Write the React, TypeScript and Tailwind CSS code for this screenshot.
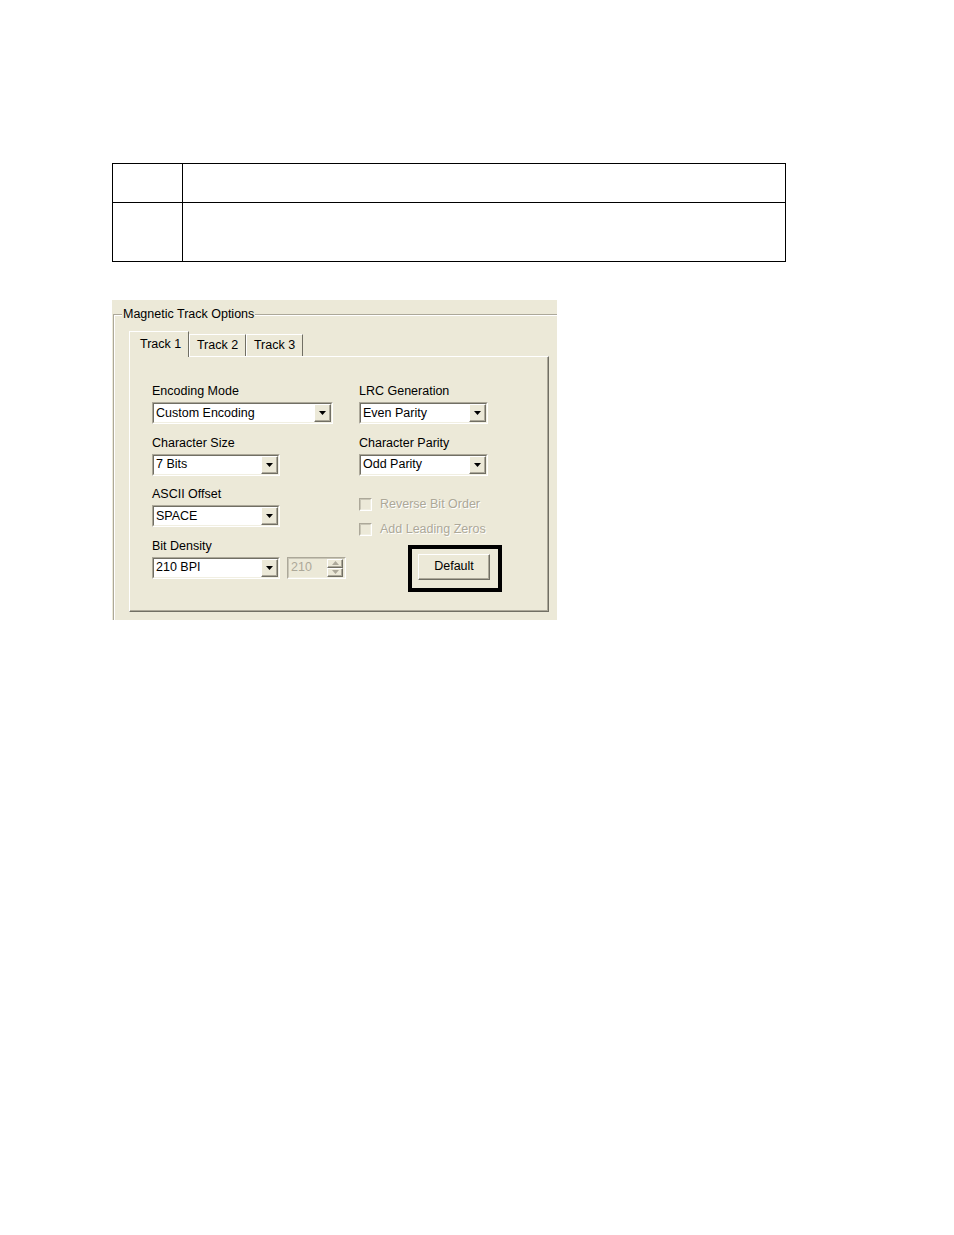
import React from 'react';

const font = { fontFamily: '"Liberation Sans", Arial, sans-serif' };

// sunken 3d frame used by combo boxes, spin box and checkboxes
const sunkenOuter = 'border border-t-[#ACA899] border-l-[#ACA899] border-r-white border-b-white';
const sunkenInner = 'border border-t-[#716F64] border-l-[#716F64] border-r-[#F1EFE2] border-b-[#F1EFE2]';
const raised =
  'border border-t-white border-l-white border-r-[#716F64] border-b-[#716F64] shadow-[inset_-1px_-1px_0_#ACA899]';

const Arrow = ({ up = false, color = '#000' }: { up?: boolean; color?: string }) => (
  <svg width="7" height="4" viewBox="0 0 7 4">
    <path d={up ? 'M0 4 L3.5 0 L7 4 Z' : 'M0 0 L7 0 L3.5 4 Z'} fill={color} />
  </svg>
);

const Combo = ({ value, width }: { value: string; width: string }) => (
  <div className={`${width} h-[22px] ${sunkenOuter}`}>
    <div className={`flex h-full items-center bg-white ${sunkenInner}`}>
      <span className="flex-1 truncate pl-[2px] text-black">{value}</span>
      <div className={`flex h-full w-[17px] items-center justify-center bg-[#ECE9D8] ${raised}`}>
        <Arrow />
      </div>
    </div>
  </div>
);

const Field = ({ label, children }: { label: string; children: React.ReactNode }) => (
  <div className="mb-[10.5px]">
    <div className="mb-[3px] h-[16px] leading-[16px] text-black">{label}</div>
    {children}
  </div>
);

const Check = ({ label }: { label: string }) => (
  <div className="flex h-[16px] items-center">
    <div className={`h-[13px] w-[13px] ${sunkenOuter}`}>
      <div className={`h-full w-full bg-[#ECE9D8] ${sunkenInner} border-t-[#C9C6B6] border-l-[#C9C6B6]`} />
    </div>
    <span className="ml-[8px] text-[#ACA899] [text-shadow:1px_1px_0_#fff]">{label}</span>
  </div>
);

const Tab = ({ label, active = false }: { label: string; active?: boolean }) => (
  <div
    className={`flex items-center bg-[#ECE9D8] border-t border-l border-t-white border-l-white border-r border-r-[#716F64] ${
      active ? 'relative z-10 -mb-[1px] h-[26px] w-[60px] pl-[10px]' : 'h-[22px] w-[57px] justify-center'
    }`}
  >
    {label}
  </div>
);

export default function App() {
  return (
    <div className="min-h-[1235px] w-[954px] bg-white text-[12.5px]" style={font}>
      <div className="h-[163px]" />
      <table className="ml-[112px] w-[674px] border-collapse">
        <tbody>
          <tr className="h-[39px]">
            <td className="w-[70px] border-[1.5px] border-black" />
            <td className="border-[1.5px] border-black" />
          </tr>
          <tr className="h-[59px]">
            <td className="border-[1.5px] border-black" />
            <td className="border-[1.5px] border-black" />
          </tr>
        </tbody>
      </table>

      <div className="ml-[112px] mt-[38px] h-[320px] w-[445px] overflow-hidden bg-[#ECE9D8]">
        <fieldset className="ml-[1px] mt-[7px] h-[340px] w-[470px] border-l border-t border-[#ACA899] pl-[15px] pt-[10px] shadow-[inset_1px_1px_0_#fff]">
          <legend className="-ml-[7px] bg-[#ECE9D8] px-[1px] leading-[14px] text-black">Magnetic Track Options</legend>

          <div className="w-[420px]">
            <div className="flex items-end">
              <Tab label="Track 1" active />
              <Tab label="Track 2" />
              <Tab label="Track 3" />
            </div>
            <div className="h-[256px] border border-t-white border-l-white border-r-[#716F64] border-b-[#716F64] shadow-[inset_-1px_-1px_0_#ACA899] pl-[22px] pt-[26px]">
              <div className="flex">
                <div className="w-[207px]">
                  <Field label="Encoding Mode">
                    <Combo value="Custom Encoding" width="w-[181px]" />
                  </Field>
                  <Field label="Character Size">
                    <Combo value="7 Bits" width="w-[128px]" />
                  </Field>
                  <Field label="ASCII Offset">
                    <Combo value="SPACE" width="w-[128px]" />
                  </Field>
                  <Field label="Bit Density">
                    <div className="flex">
                      <Combo value="210 BPI" width="w-[128px]" />
                      <div className={`ml-[7px] h-[22px] w-[59px] ${sunkenOuter}`}>
                        <div className={`flex h-full items-center bg-[#ECE9D8] ${sunkenInner} border-t-[#C9C6B6] border-l-[#C9C6B6]`}>
                          <span className="flex-1 pl-[2px] text-[#ACA899]">210</span>
                          <div className="mr-[1px] flex h-full w-[16px] flex-col">
                            <div className={`flex flex-1 items-center justify-center ${raised}`}>
                              <Arrow up color="#ACA899" />
                            </div>
                            <div className={`flex flex-1 items-center justify-center ${raised}`}>
                              <Arrow color="#ACA899" />
                            </div>
                          </div>
                        </div>
                      </div>
                    </div>
                  </Field>
                </div>

                <div>
                  <Field label="LRC Generation">
                    <Combo value="Even Parity" width="w-[129px]" />
                  </Field>
                  <Field label="Character Parity">
                    <Combo value="Odd Parity" width="w-[129px]" />
                  </Field>
                  <div className="mt-[21px]">
                    <Check label="Reverse Bit Order" />
                  </div>
                  <div className="mt-[9px]">
                    <Check label="Add Leading Zeros" />
                  </div>
                  <div className="ml-[49px] mt-[7px] h-[47px] w-[94px] border-4 border-black pl-[6px] pt-[5px]">
                    <div className={`flex h-[26px] w-[72px] items-center justify-center bg-[#ECE9D8] text-black ${raised}`}>
                      Default
                    </div>
                  </div>
                </div>
              </div>
            </div>
          </div>
        </fieldset>
      </div>
    </div>
  );
}
